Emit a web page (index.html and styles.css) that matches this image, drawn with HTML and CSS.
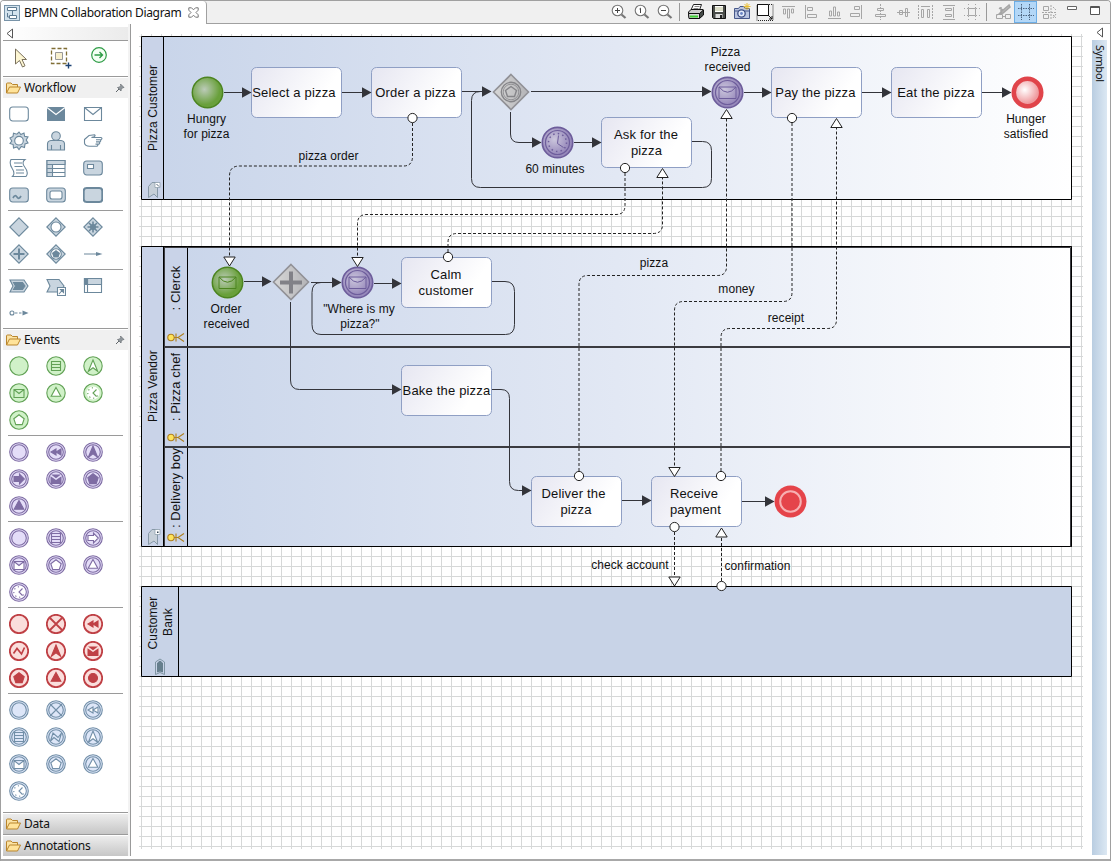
FILE: index.html
```
<!DOCTYPE html>
<html lang="en">
<head>
  <meta charset="UTF-8" />
  <meta name="viewport" content="width=device-width, initial-scale=1" />
  <title>BPMN Collaboration Diagram</title>
  <link rel="stylesheet" href="styles.css">
</head>
<body>
  <!-- shared icon shapes, 20x20 -->
  <svg class="sprite">
    <symbol id="ring" viewBox="0 0 20 20"><circle cx="10" cy="10" r="9.2"/></symbol>
    <symbol id="ring2" viewBox="0 0 20 20"><circle cx="10" cy="10" r="9.3"/><circle cx="10" cy="10" r="7.3"/></symbol>
    <symbol id="list" viewBox="0 0 20 20"><path d="M5.500 5.500h9v9h-9zM5.500 8.500h9M5.500 11.500h9"/></symbol>
    <symbol id="up" viewBox="0 0 20 20"><path d="M10 4l4.700 11.300L10 11.800l-4.700 3.500z"/></symbol>
    <symbol id="mail" viewBox="0 0 20 20"><path d="M5 6.500h10v8H5zM5 6.500L10 10.500l5-4"/></symbol>
    <symbol id="mailfull" viewBox="0 0 20 20"><path stroke="none" d="M4.500 7.300L10 11l5.500-3.700V15h-11z"/><path stroke="none" d="M5 5.500h10L10 9.300z"/></symbol>
    <symbol id="tri" viewBox="0 0 20 20"><path d="M10 4.500l4.800 8.700H5.200z"/></symbol>
    <symbol id="penta" viewBox="0 0 20 20"><path d="M10 4.800l5.200 3.900-2 5.900H6.800l-2-5.900z"/></symbol>
    <symbol id="clock" viewBox="0 0 20 20"><circle cx="10" cy="10" r="6.500" fill="#fff" stroke="none"/><path fill="none" d="M13.500 6.500L10 10l3.500 3.500"/><path fill="none" stroke-dasharray="1.200 2.800" d="M10 4.800a5.200 5.200 0 1 0 5.200 5.200"/></symbol>
    <symbol id="rewind" viewBox="0 0 20 20"><path d="M10 7v6L5 10zM15 7v6L10 10z"/></symbol>
    <symbol id="right" viewBox="0 0 20 20"><path d="M5 7.500h5.500V5.200l4.800 4.800-4.800 4.800v-2.300H5z"/></symbol>
    <symbol id="cross" viewBox="0 0 20 20"><path d="M4 4l12 12M16 4L4 16"/></symbol>
    <symbol id="zig" viewBox="0 0 20 20"><path fill="none" stroke-width="1.700" d="M4.500 12.500l3.500-5 4.500 5.500 3-6.500"/></symbol>
    <symbol id="zigopen" viewBox="0 0 20 20"><path d="M4.500 14L7 6l5 4.500L15.500 6 13 14.500 8 10.500z"/></symbol>
    <symbol id="dot" viewBox="0 0 20 20"><circle cx="10" cy="10" r="4.500"/></symbol>
    <symbol id="diamond" viewBox="0 0 20 20"><path d="M10 .8l9.200 9.200-9.200 9.200L.8 10z"/></symbol>
    <symbol id="rect" viewBox="0 0 20 20"><rect x=".7" y="3" width="18.600" height="14" rx="3"/></symbol>
    <symbol id="folder" viewBox="0 0 16 16"><path d="M1.500 13V4q0-1 1-1H6l1.500 1.500h5V7" fill="#fbe3a4" stroke="#b9852c"/><path d="M1.500 13L4.500 7h11L12.500 13z" fill="#ffe39a" stroke="#b9852c"/></symbol>
    <symbol id="pin" viewBox="0 0 10 10"><path d="M5.500 1l3.500 3.500-1.200.2-1.500 1.500-.3 1.800L2.500 4.500l1.800-.3 1.400-1.500z" fill="#8f969b" stroke="#6e7478" stroke-width=".8"/><path d="M4 6L1 9" stroke="#5e6468"/></symbol>
    <symbol id="lens" viewBox="0 0 18 18"><circle cx="7.500" cy="7.500" r="5.300" fill="#fff" stroke="#777" stroke-width="1.100"/><path d="M11.500 11.500l4 3.500" stroke="#777" stroke-width="2.200"/></symbol>
  </svg>

  <div class="window">
    <header class="bar">
      <div class="tab">
        <svg width="16" height="16" viewBox="0 0 16 16"><rect x=".5" y=".5" width="15" height="15" fill="#d3e3ee" stroke="#7893a8"/><path d="M3.500 2.500h9v3h-9zM5.500 10.500h7v3h-7z" fill="#fff" stroke="#5d7b92"/><path d="M8.500 6v4M3.500 8v4h2" fill="none" stroke="#5d7b92"/></svg>
        <span class="tab-title">BPMN Collaboration Diagram</span>
        <svg width="11" height="11" viewBox="0 0 11 11"><path d="M.8.8h2.700l2 2 2-2h2.700v2.400L8 5.500l2.200 2.300v2.400H7.500l-2-2-2 2H.8V7.800L3 5.500.8 3.200z" fill="#fff" stroke="#777"/></svg>
      </div>
      <div class="tools">
        <div class="tool"><svg width="18" height="18"><use href="#lens"/><path d="M5 7.500h5M7.500 5v5" stroke="#444"/></svg></div>
        <div class="tool"><svg width="18" height="18"><use href="#lens"/><path d="M6.500 6l1-.8V10" fill="none" stroke="#444"/></svg></div>
        <div class="tool"><svg width="18" height="18"><use href="#lens"/><path d="M5 7.500h5" stroke="#444"/></svg></div>
        <div class="sep"></div>
        <div class="tool"><svg width="18" height="18"><path d="M6.500 1.500h8L12.500 7H4z" fill="#fff" stroke="#222"/><path d="M7.500 3.500h5M6.500 5.500h5" stroke="#888"/><path d="M1.500 9L4 6.500h12l.5 4-3 4H2z" fill="#ccc" stroke="#111"/><path d="M1.500 10.500h11v5H2z" fill="#d8ddd8" stroke="#111"/><path d="M12.500 10.500l4-3.500v5l-4 3.500z" fill="#454b48" stroke="#111"/><path d="M3 13.500h8" stroke="#3fcf35" stroke-width="2"/></svg></div>
        <div class="tool"><svg width="18" height="18"><path d="M2.500 2.500h13v13h-12l-1-1z" fill="#4a4d4a" stroke="#111"/><path d="M5 3h8v6H5z" fill="#fff"/><path d="M5 5h8M5 7h8" stroke="#b7bb90"/><path d="M5.500 11h7v4h-7z" fill="#ddd"/><path d="M10 12h2v3h-2z" fill="#222"/></svg></div>
        <div class="tool"><svg width="18" height="18"><path d="M1.500 5.500h4L7 3.500h4l1.500 2h4v10h-15z" fill="#b9c4e0" stroke="#47588a"/><path d="M1 8h16" stroke="#47588a"/><circle cx="8.500" cy="10.500" r="3.700" fill="#e4ecfb" stroke="#3b4d83" stroke-width="1.300"/><circle cx="8.500" cy="10.500" r="1.400" fill="#6c86c5"/><path d="M14 0v7M10.500 3.500h7M11.500 1l5 5M16.500 1l-5 5" stroke="#eabf35"/></svg></div>
        <div class="tool"><svg width="18" height="18"><path d="M1 1.500h16v16H1z" fill="none" stroke="#222" stroke-dasharray="1 1"/><path d="M1.500 1.500h11v11h-11z" fill="#fff" stroke="#111"/><path d="M12 12l4 4m0-3v3h-3" stroke="#111" fill="none"/></svg></div>
        <div class="tool dim"><svg width="18" height="18"><path d="M3 3.500h13"/><path d="M4.500 6h2v5h-2zM8.500 6h2v9h-2zM12.500 6h2v4h-2z"/></svg></div>
        <div class="tool dim"><svg width="18" height="18"><path d="M3.500 2v14"/><path d="M5.500 4.500h5v3h-5zM5.500 11.500h9v3h-9z"/></svg></div>
        <div class="tool dim"><svg width="18" height="18"><path d="M3 15.500h13"/><path d="M4.500 8h2v5h-2zM8.500 4h2v9h-2zM12.500 9h2v4h-2z"/></svg></div>
        <div class="tool dim"><svg width="18" height="18"><path d="M13.500 2v14"/><path d="M6.500 3.500h5v3h-5zM2.500 10.500h9v3h-9z"/></svg></div>
        <div class="tool dim"><svg width="18" height="18"><path d="M9.500 1v16" stroke-dasharray="2 1"/><path d="M6.500 5.500h6v2h-6zM4.500 11.500h10v2h-10z"/></svg></div>
        <div class="tool dim"><svg width="18" height="18"><path d="M3 9.500h13"/><path d="M5.500 7.500h3v4h-3zM11.500 5.500h2v8h-2z"/></svg></div>
        <div class="tool dim"><svg width="18" height="18"><path d="M1.500 2v14M15.500 2v14" stroke-dasharray="2 1"/><path d="M4 3.500h9"/><path d="M4.500 6.500h2v8h-2zM10.500 6.500h2v8h-2z"/></svg></div>
        <div class="tool dim"><svg width="18" height="18"><path d="M3 2.500h12M3 16.500h12"/><path d="M5.500 5.500h6v2h-6zM5.500 11.500h6v2h-6zM13.500 4v11"/></svg></div>
        <div class="tool dim"><svg width="18" height="18"><path d="M5.500 5.500h7v7h-7z"/><path d="M5.500 1v16M12.500 1v16M1 5.500h16M1 12.500h16" stroke-dasharray="1 2"/></svg></div>
        <div class="sep"></div>
        <div class="tool dim"><svg width="18" height="18"><path d="M15 2L8 8l-3 3 4-1 7-6zM5 5l4 2M7 4v6" fill="#bbb" stroke-width="1.500"/><path d="M2.500 11.500h6v4h-6zM11.500 11.500h5v4h-5zM9 13.500h2"/></svg></div>
        <div class="tool on"><svg width="18" height="18"><path d="M4.500 1v16M12.500 1v16M1 5.500h16M1 12.500h16" stroke="#4c6480" stroke-dasharray="1.500 1"/></svg></div>
        <div class="tool dim"><svg width="18" height="18"><path d="M3.500 3.500h5v4h-5zM3.500 11.500h5v4h-5z"/><path d="M11 2v15M2 9.500h15M13 4l3 3M13 12l3 3M16 11l-3 4" stroke-dasharray="2 1"/></svg></div>
        <div class="tool corner"><svg width="12" height="6"><path d="M1.500 1.500h9v3h-9z" fill="#fff" stroke="#666"/></svg></div>
        <div class="tool corner"><svg width="12" height="11"><path d="M1.500 1.500h9v8h-9zM1.500 2.500h9" fill="#fff" stroke="#555"/></svg></div>
      </div>
    </header>

    <div class="main">
      <aside class="palette">
        <div class="collapse"><svg width="8" height="11"><path d="M6.500 1v9L1 5.500z" fill="#fff" stroke="#555"/></svg></div>
        <div class="modes">
          <svg width="16" height="21"><path d="M1.500 2v15l4-3.500 3 6.500 2.500-1.200-3-6.300h4.500z" fill="#fdf6d3" stroke="#7a705c"/></svg>
          <svg width="22" height="22"><path d="M1.500 1.500h15v15h-15z" fill="none" stroke="#806e35" stroke-width="1.300" stroke-dasharray="4 2"/><path d="M5.500 5.500h7v7h-7z" fill="#f7efce" stroke="#999"/><path d="M15.500 18.500h6M18.500 15.500v6" stroke="#1c4273" stroke-width="1.400"/></svg>
          <svg width="18" height="18"><circle cx="9" cy="8" r="7.300" fill="#f4fff4" stroke="#2e9c46" stroke-width="1.200"/><path d="M4.500 8h8M9.500 5l3 3-3 3" fill="none" stroke="#2e9c46" stroke-width="1.400"/></svg>
        </div>

        <div class="drawer"><svg width="16" height="16"><use href="#folder"/></svg><span>Workflow</span><svg class="pin" width="10" height="10"><use href="#pin"/></svg></div>
        <div class="group first flow">
          <svg class="icon"><use class="hollow" href="#rect"/></svg>
          <svg class="icon"><path class="solid" stroke="none" d="M1 3h18v14H1z"/><path d="M1 3.500l9 7 9-7" fill="none" stroke="#fff"/></svg>
          <svg class="icon"><path class="hollow" d="M1.500 3.500h17v13h-17zM1.500 3.500L10 10.500l8.500-7"/></svg>
          <svg class="icon"><path d="M10 1l1.800 2.500L15 2l.6 3.300L19 6l-1.800 3L19 12l-3 1-.5 3.500-3.200-1L10 18.500 8 16l-3.500 1-.3-3.400L1 12.500 2.800 10 1 7l3-1.500.5-3.300 3.400 1z"/><circle class="hollow" cx="10" cy="9.700" r="4.300"/></svg>
          <svg class="icon"><path d="M1.500 19v-6q0-3 3.500-3.500h10q3.500.5 3.500 3.500v6zM5.500 19v-5M14.500 19v-5"/><circle cx="10" cy="5" r="4.300"/></svg>
          <svg class="icon"><path class="hollow" d="M1.500 8.500L6 4.500l5.500-.8q1.500 1-.5 2L8.500 6.500H18q2 1 0 2.200h-5H17q1.500 1 0 2.200h-4 3q1.500 1 0 2.200h-3.500 2q1 1.200-.5 2.100H6.500q-4.500 0-5-3z"/></svg>
          <svg class="icon"><path class="hollow" d="M2 1.500h14q-4 3 0 8t1 9H3.500q3-3-.3-8T2 1.500zM5 5h8M5.500 8.500h8M7 12h8M7 15h8"/></svg>
          <svg class="icon"><path class="hollow" d="M1 2.500h18v16H1z"/><path d="M1 2.500h18v4H1zM1 6.500h5.500v12H1zM1 10.500h18M1 14.500h18"/></svg>
          <svg class="icon"><use href="#rect"/><path class="hollow" d="M4.500 6.500h6v4h-6z"/></svg>
          <svg class="icon"><use href="#rect"/><path d="M4 13q2-4 4-1t4-1" fill="none" stroke-width="1.700"/></svg>
          <svg class="icon"><use href="#rect"/><rect class="hollow" x="4" y="6" width="12" height="8" rx="2"/></svg>
          <svg class="icon thick"><use href="#rect"/></svg>
        </div>
        <div class="group flow">
          <svg class="icon"><use href="#diamond"/></svg>
          <svg class="icon"><use href="#diamond"/><circle class="hollow" cx="10" cy="10" r="5"/></svg>
          <svg class="icon"><use href="#diamond"/><path d="M10 4.500v11M4.500 10h11M6 6l8 8M14 6l-8 8" stroke-width="1.600"/><circle class="solid" cx="10" cy="10" r="3" stroke="none"/></svg>
          <svg class="icon"><use href="#diamond"/><path d="M10 4.500v11M4.500 10h11" stroke-width="2"/></svg>
          <svg class="icon"><use href="#diamond"/><circle class="hollow" cx="10" cy="10" r="5.300"/><path class="solid" d="M10 6l4 3-1.500 4.500h-5L6 9z" stroke="none"/></svg>
          <svg class="icon"><path d="M1 10h14"/><path class="solid" stroke="none" d="M13 8l6.500 2-6.500 2z"/></svg>
        </div>
        <div class="group flow">
          <svg class="icon"><path d="M1 4h14l4 6-4 6H1l3-6z"/><path class="solid" d="M4.500 6.500h9l2.500 3.500-2.500 3.500h-9L6.500 10z"/></svg>
          <svg class="icon"><path d="M1 3.500h12l5 6.500-4 6H1l3-6z"/><path class="hollow" d="M11.500 11.500h8v8h-8z"/><path class="solid" d="M13 18l3.500-4M14.500 13.500h3v3z"/></svg>
          <svg class="icon"><path class="hollow" d="M1.500 2.500h17v14h-17z"/><path d="M1.500 2.500h17v6h-17z"/><path class="solid" d="M1.500 2.500h3v6h-3z"/><path d="M4.500 3v13.500"/></svg>
          <svg class="icon"><circle class="hollow" cx="3" cy="10" r="2"/><path d="M6 10h10" stroke-dasharray="2.500 1.500"/><path class="solid" stroke="none" d="M13.500 7.500l6 2.500-6 2.500z"/></svg>
        </div>

        <div class="drawer"><svg width="16" height="16"><use href="#folder"/></svg><span>Events</span><svg class="pin" width="10" height="10"><use href="#pin"/></svg></div>
        <div class="group first green">
          <svg class="icon"><use href="#ring"/></svg>
          <svg class="icon"><use href="#ring"/><use href="#list"/></svg>
          <svg class="icon"><use href="#ring"/><use class="hollow" href="#up"/></svg>
          <svg class="icon"><use href="#ring"/><use href="#mail"/></svg>
          <svg class="icon"><use href="#ring"/><use class="hollow" href="#tri"/></svg>
          <svg class="icon"><use href="#ring"/><use href="#clock"/></svg>
          <svg class="icon"><use href="#ring"/><use class="hollow" href="#penta"/></svg>
        </div>
        <div class="group purple">
          <svg class="icon"><use href="#ring2"/></svg>
          <svg class="icon"><use href="#ring2"/><use class="solid" href="#rewind"/></svg>
          <svg class="icon"><use href="#ring2"/><use class="solid" href="#up"/></svg>
          <svg class="icon"><use href="#ring2"/><use class="solid" href="#right"/></svg>
          <svg class="icon"><use href="#ring2"/><use class="solid" href="#mailfull"/></svg>
          <svg class="icon"><use href="#ring2"/><use class="solid" href="#penta"/></svg>
          <svg class="icon"><use href="#ring2"/><use class="solid" href="#tri"/></svg>
        </div>
        <div class="group purple">
          <svg class="icon"><use href="#ring2"/></svg>
          <svg class="icon"><use href="#ring2"/><use href="#list"/></svg>
          <svg class="icon"><use href="#ring2"/><use class="hollow" href="#right"/></svg>
          <svg class="icon"><use href="#ring2"/><use class="hollow" href="#mail"/></svg>
          <svg class="icon"><use href="#ring2"/><use class="hollow" href="#penta"/></svg>
          <svg class="icon"><use href="#ring2"/><use class="hollow" href="#tri"/></svg>
          <svg class="icon"><use href="#ring2"/><use href="#clock"/></svg>
        </div>
        <div class="group red">
          <svg class="icon"><use class="bold" href="#ring"/></svg>
          <svg class="icon"><use class="bold" href="#ring"/><use class="bold" href="#cross"/></svg>
          <svg class="icon"><use class="bold" href="#ring"/><use class="solid" href="#rewind"/></svg>
          <svg class="icon"><use class="bold" href="#ring"/><use href="#zig"/></svg>
          <svg class="icon"><use class="bold" href="#ring"/><use class="solid" href="#up"/></svg>
          <svg class="icon"><use class="bold" href="#ring"/><use class="solid" href="#mailfull"/></svg>
          <svg class="icon"><use class="bold" href="#ring"/><use class="solid" href="#penta"/></svg>
          <svg class="icon"><use class="bold" href="#ring"/><use class="solid" href="#tri"/></svg>
          <svg class="icon"><use class="bold" href="#ring"/><use class="solid" href="#dot"/></svg>
        </div>
        <div class="group blue">
          <svg class="icon"><use href="#ring2"/></svg>
          <svg class="icon"><use href="#ring2"/><use href="#cross"/></svg>
          <svg class="icon"><use href="#ring2"/><use class="hollow" href="#rewind"/></svg>
          <svg class="icon"><use href="#ring2"/><use href="#list"/></svg>
          <svg class="icon"><use href="#ring2"/><use href="#zigopen"/></svg>
          <svg class="icon"><use href="#ring2"/><use class="hollow" href="#up"/></svg>
          <svg class="icon"><use href="#ring2"/><use class="hollow" href="#mail"/></svg>
          <svg class="icon"><use href="#ring2"/><use class="hollow" href="#penta"/></svg>
          <svg class="icon"><use href="#ring2"/><use class="hollow" href="#tri"/></svg>
          <svg class="icon"><use href="#ring2"/><use href="#clock"/></svg>
        </div>
        <div class="closed">
          <div class="drawer shut"><svg width="16" height="16"><use href="#folder"/></svg><span>Data</span></div>
          <div class="drawer shut"><svg width="16" height="16"><use href="#folder"/></svg><span>Annotations</span></div>
        </div>
      </aside>

      <div class="canvas">
        <svg class="diagram" width="960" height="831" viewBox="131 24 960 831">
          <defs>
            <pattern id="grid" x="141" y="36" width="10" height="10" patternUnits="userSpaceOnUse"><path d="M.5 0v10M0 .5h10" stroke="#d6d8d8"/></pattern>
            <linearGradient id="pool" gradientUnits="userSpaceOnUse" x1="163" y1="0" x2="1071" y2="0"><stop offset="0" stop-color="#c9d5ea"/><stop offset=".5" stop-color="#e2e8f4"/><stop offset="1" stop-color="#fff"/></linearGradient>
            <linearGradient id="taskfill" x2="1" y2=".35"><stop offset="0" stop-color="#e6e6f1"/><stop offset=".9" stop-color="#fff"/></linearGradient>
            <radialGradient id="gfill" cx=".4" cy=".4"><stop offset="0" stop-color="#bccbb9"/><stop offset="1" stop-color="#69a03b"/></radialGradient>
            <radialGradient id="pfill" cx=".4" cy=".4"><stop offset="0" stop-color="#cbc6dc"/><stop offset="1" stop-color="#9789bb"/></radialGradient>
            <radialGradient id="rfill" cx=".4" cy=".4"><stop offset="0" stop-color="#fff"/><stop offset="1" stop-color="#ef9a9e"/></radialGradient>
            <linearGradient id="gwfill" x2="1"><stop offset="0" stop-color="#d7d7d7"/><stop offset="1" stop-color="#b4b4b7"/></linearGradient>
            <marker id="arrow" markerUnits="userSpaceOnUse" markerWidth="10" markerHeight="12" refX="9" refY="6"><path d="M0 .8v10.400L9.500 6z" fill="#33343a"/></marker>
            <marker id="open" markerUnits="userSpaceOnUse" markerWidth="12" markerHeight="14" refX="1" refY="7" orient="auto"><path d="M1 1.300v11.400L10 7z" fill="#fff" stroke="#222"/></marker>
            <marker id="bubble" markerUnits="userSpaceOnUse" markerWidth="12" markerHeight="12" refX="6" refY="6"><circle cx="6" cy="6" r="4.600" fill="#fff" stroke="#222"/></marker>
            <g id="task"><rect width="90" height="50" rx="5" fill="url(#taskfill)" stroke="#8f9fc4"/></g>
            <g id="gateway"><path d="M0-17.500L17.500 0 0 17.500-17.500 0z" fill="url(#gwfill)" stroke="#919196" stroke-width="1.600"/></g>
            <g id="caught"><circle r="15.200" fill="url(#pfill)" stroke="#6d5d9b" stroke-width="1.700"/><circle r="12" fill="none" stroke="#6d5d9b" stroke-width="1.200"/></g>
            <g id="letter"><path d="M-8.500-5.500h17v11.500h-17zM-8.500-5.500Q0 5 8.500-5.500" fill="none"/></g>
            <g id="actor" fill="none" stroke="#b0801e" stroke-width="1.100"><circle cx="-4.500" r="3.200" fill="#ffe45c"/><path d="M-1.500 0h4M.5-4v8M8.500-4L2.500 0l6 4"/></g>
            <g id="flag"><path d="M-5 7.500v-11l3.500-4h5.500v15l-3.500-3.500z" fill="#c6cfd8" stroke="#8799a8"/></g>
          </defs>

          <rect x="139" y="34" width="944" height="815" fill="url(#grid)"/>

          <!-- Pizza Customer -->
          <g class="frame">
            <path d="M141.500 36.500h22v163h-22z" fill="#c9d3e8"/>
            <path d="M163.500 36.500h908v163h-908z" fill="url(#pool)"/>
          </g>
          <!-- Pizza Vendor -->
          <g class="frame">
            <path d="M141.500 246.500h930v300h-930z" fill="#c9d3e8"/>
            <path d="M187.500 246.500h884v300h-884z" fill="url(#pool)"/>
            <path d="M163.500 247v299M187.500 247v299"/>
            <path d="M165 347h906M165 447h906" class="lane"/>
            <path d="M164.500 247.500h906v299M164.500 247v299" class="lane thin"/>
          </g>
          <!-- Customer Bank -->
          <g class="frame">
            <path d="M141.500 586.500h930v90h-930zM178.500 586.500v90" fill="#c8d3e7"/>
          </g>

          <g class="side">
            <text transform="translate(156.500 108) rotate(-90)">Pizza Customer</text>
            <text transform="translate(156.500 386) rotate(-90)">Pizza Vendor</text>
            <text transform="translate(156.500 623) rotate(-90)">Customer</text>
            <text transform="translate(171.500 622) rotate(-90)">Bank</text>
          </g>
          <g class="side big">
            <text transform="translate(180 288) rotate(-90)">: Clerck</text>
            <text transform="translate(180 387) rotate(-90)">: Pizza chef</text>
            <text transform="translate(180 488) rotate(-90)">: Delivery boy</text>
          </g>
          <use href="#actor" x="175.500" y="337.500"/>
          <use href="#actor" x="175.500" y="437.500"/>
          <use href="#actor" x="175.500" y="537.500"/>
          <use href="#flag" x="153.500" y="190"/><path d="M155 182.500h5v5h-5z" fill="#fff" stroke="#8799a8" stroke-width=".7"/><path d="M156.500 184l2.500 2.500" stroke="#567"/>
          <use href="#flag" x="153.500" y="537"/><path d="M155 529.500h5v5h-5z" fill="#fff" stroke="#8799a8" stroke-width=".7"/><path d="M157 531.500h1.500v1.500h-1.500z" fill="#345"/>
          <path d="M155.500 674.500v-12.500l4.500-3 4.500 3v12.500l-4.500-2z" fill="none" stroke="#7f95a3"/><path d="M157.500 672v-9l2.500-2 2.500 2v9l-2.500-1z" fill="#667f8d" stroke="#667f8d"/>

          <!-- tasks -->
          <use href="#task" x="251.500" y="67.500"/>
          <use href="#task" x="371.500" y="67.500"/>
          <use href="#task" x="771.500" y="67.500"/>
          <use href="#task" x="891.500" y="67.500"/>
          <use href="#task" x="601.500" y="117.500"/>
          <use href="#task" x="401.500" y="257.500"/>
          <use href="#task" x="401.500" y="365.500"/>
          <use href="#task" x="531.500" y="476.500"/>
          <use href="#task" x="651.500" y="476.500"/>

          <!-- sequence flows -->
          <g class="flowline">
            <path d="M224 92.500h27"/>
            <path d="M342 92.500h29"/>
            <path d="M462 91.500h29"/>
            <path d="M531 91.500h180"/>
            <path d="M744 92.500h27"/>
            <path d="M862 92.500h29"/>
            <path d="M982 92.500h29"/>
            <path d="M510.500 112v22q0 8.500 8.500 8.500h22"/>
            <path d="M574 142.500h27"/>
            <path d="M244 281.500h27"/>
            <path d="M311 282.500h30"/>
            <path d="M374 283.500h27"/>
            <path d="M290.500 302v78q0 9.500 9 9.500h101.500"/>
            <path d="M492 389.500h9q8.500 0 8.500 9v83q0 9 9 9h12.500"/>
            <path d="M622 500.500h29"/>
            <path d="M742 501.500h32"/>
          </g>
          <g class="loop">
            <path d="M692 141.500h10.500q9 0 9 9v28q0 9-9 9h-222q-9 0-9-9v-78q0-9 9-9"/>
            <path d="M492 281.500h13q9.500 0 9.500 10v33q0 10-9 10h-184.500q-9 0-9-10v-32q0-10 9-10"/>
          </g>

          <!-- events and gateways -->
          <circle cx="207.500" cy="92.500" r="15.200" fill="url(#gfill)" stroke="#4c8420" stroke-width="1.500"/>
          <circle cx="227.500" cy="282.500" r="15.200" fill="url(#gfill)" stroke="#4c8420" stroke-width="1.500"/>
          <use href="#letter" x="227.500" y="282.500" stroke="#4c8420"/>
          <use href="#caught" x="557.500" y="142.500"/>
          <g transform="translate(557.500 142.500)" fill="none" stroke="#6d5d9b"><circle r="9" stroke-width="1.500" stroke-dasharray="1.500 3.210"/><path d="M1-7L0 1l6 4"/></g>
          <use href="#caught" x="727.500" y="92.500"/><use href="#letter" x="727.500" y="92.500" stroke="#6d5d9b"/>
          <use href="#caught" x="357.500" y="282.500"/><use href="#letter" x="357.500" y="282.500" stroke="#6d5d9b"/>
          <circle cx="1027.500" cy="92.500" r="13.700" fill="url(#rfill)" stroke="#e0444a" stroke-width="4.600"/>
          <circle cx="790.500" cy="501.500" r="16" fill="#e5444a"/><circle cx="790.500" cy="501.500" r="10.300" fill="none" stroke="#f7b0b2" stroke-width="2"/>
          <use href="#gateway" x="511" y="92"/>
          <g transform="translate(511 92)" fill="none" stroke="#858589" stroke-width="1.400"><circle r="9.700"/><circle r="7.800" stroke-width=".8"/><path d="M0-5.500l5.500 4-2 6h-7l-2-6z"/></g>
          <use href="#gateway" x="291" y="282"/>
          <path d="M291 271.500v22M280 282.500h22" stroke="#818187" stroke-width="4"/>

          <!-- message flows -->
          <g class="message">
            <path d="M412.500 118v38.500q0 9.500-9 9.500h-164q-10 0-10 10v81"/>
            <path d="M625 168v37.500q0 9-9 9h-249q-9.500 0-9.500 9v34"/>
            <path d="M448 257v-14.500q0-9 9-9h196q9.500 0 9.500-9v-47"/>
            <path d="M579 476v-191.500q0-9 9-9h129.500q9 0 9-9v-148"/>
            <path d="M792 118v174.500q0 9-9 9h-99.500q-9 0-9 9v157"/>
            <path d="M721 476v-138.500q0-9 9-9h97.500q9 0 9-9v-192"/>
            <path d="M674.500 527v50"/>
            <path d="M721.500 586v-49"/>
          </g>

          <g class="task-text">
            <text x="294" y="97">Select a pizza</text>
            <text x="415.500" y="97">Order a pizza</text>
            <text x="815.500" y="97">Pay the pizza</text>
            <text x="936" y="97">Eat the pizza</text>
            <text x="646" y="139">Ask for the</text><text x="646.500" y="155">pizza</text>
            <text x="446" y="279">Calm</text><text x="446" y="295">customer</text>
            <text x="446.500" y="395">Bake the pizza</text>
            <text x="573.500" y="498">Deliver the</text><text x="576" y="514">pizza</text>
            <text x="694" y="498">Receive</text><text x="695.500" y="514">payment</text>
          </g>
          <g class="label">
            <text x="206.500" y="123">Hungry</text><text x="206.500" y="138">for pizza</text>
            <text x="328.500" y="160">pizza order</text>
            <text x="555" y="173">60 minutes</text>
            <text x="725.500" y="56">Pizza</text><text x="727.500" y="71">received</text>
            <text x="1026" y="123">Hunger</text><text x="1026" y="138">satisfied</text>
            <text x="226" y="313">Order</text><text x="226.500" y="328">received</text>
            <text x="359" y="313">"Where is my</text><text x="360" y="328">pizza?"</text>
            <text x="654" y="267">pizza</text>
            <text x="736.500" y="293">money</text>
            <text x="786" y="322">receipt</text>
            <text x="630" y="569">check account</text>
            <text x="757.500" y="570">confirmation</text>
          </g>
        </svg>
      </div>

      <aside class="symbols">
        <div class="expand"><svg width="8" height="11"><path d="M6.500 1v9L1 5.500z" fill="#fff" stroke="#555"/></svg></div>
        <div class="symbol-tab">Symbol</div>
      </aside>
    </div>
  </div>
</body>
</html>
```

FILE: styles.css
```
* {
  box-sizing: border-box;
}
body {
  margin: 0;
  font-family: "Noto Sans", "Open Sans", sans-serif;
  font-size: 12px;
  color: #111;
  background: #fff;
}
svg {
  display: block;
  flex: none;
}
.sprite {
  width: 0;
  height: 0;
  position: absolute;
}
.window {
  width: 1111px;
  height: 861px;
  display: flex;
  flex-direction: column;
  border: 1px solid #a0a0a0;
  border-width: 1px 1px 0;
  border-radius: 4px 4px 0 0;
  overflow: hidden;
}

/* tab and toolbar */
.bar {
  display: flex;
  height: 23px;
  flex: none;
  background: #f0f0f0;
}
.tab {
  width: 206px;
  display: flex;
  align-items: center;
  padding-left: 3px;
  background: #fff;
  border-right: 1px solid #a0a0a0;
  border-radius: 0 4px 0 0;
}
.tab-title {
  width: 158px;
  margin: 0 6px 0 4px;
  white-space: nowrap;
  letter-spacing: -0.33px;
}
.tools {
  flex: 1;
  display: flex;
  justify-content: flex-end;
  padding-right: 4px;
  border-bottom: 1px solid #a0a0a0;
}
.tool {
  width: 23px;
  display: flex;
  align-items: center;
  justify-content: center;
}
.tool.dim svg {
  fill: none;
  stroke: #a6a6a6;
}
.tool.on {
  background: #b3d7f7;
  border: 1px solid #6daee6;
}
.tool.corner {
  align-items: flex-start;
  padding-top: 4px;
}
.sep {
  width: 1px;
  height: 18px;
  margin: 2px 4px 0 3px;
  background: #999;
}

.main {
  flex: 1;
  display: flex;
  min-height: 0;
  border-bottom: 2px solid #a8a8a8;
}

/* palette */
.palette {
  width: 130px;
  flex: none;
  height: 832px;
  padding: 3px 2px 0;
  display: flex;
  flex-direction: column;
  border-right: 1px solid #9a9a9a;
  box-shadow: inset -2px 0 #f3f3f3;
}
.collapse {
  height: 14px;
  padding: 1px 0 0 3px;
  background: linear-gradient(90deg, #fff, #ebebeb);
  border-bottom: 1px solid #9a9a9a;
}
.modes {
  height: 35px;
  display: flex;
  align-items: flex-start;
  padding: 6px 0 0 11px;
}
.modes svg + svg {
  margin-left: 20px;
}
.modes svg:last-child {
  margin-left: 18px;
}
.drawer {
  height: 22px;
  flex: none;
  display: flex;
  align-items: center;
  gap: 3px;
  padding: 0 3px 0 2px;
  background: #f0f0f0;
  border-top: 1px solid #9a9a9a;
  box-shadow: inset 0 1px #fff;
  letter-spacing: -0.2px;
}
.drawer .pin {
  margin-left: auto;
}
.drawer.shut {
  background: linear-gradient(#efefef, #c6c6c6);
}
.closed {
  margin-top: auto;
}
.group {
  display: grid;
  grid-template-columns: repeat(3, 20px);
  gap: 7px 17px;
  margin: 0 5px;
  padding: 6px 1px 5px;
  border-top: 1px solid #9a9a9a;
}
.group.first {
  border-top: none;
}
.icon {
  width: 20px;
  height: 20px;
  stroke: currentColor;
  stroke-width: 1.1;
  fill: var(--tint);
}
.solid { fill: currentColor; }
.hollow { fill: #fff; }
.bold { stroke-width: 1.8; }
.thick { stroke-width: 2; }
.flow { color: #6c889c; --tint: #c9d5df; }
.green { color: #62a256; --tint: #d0f1c8; }
.purple { color: #7e6ca3; --tint: #e4ddf8; }
.red { color: #bf4045; --tint: #fadedc; }
.blue { color: #728fa8; --tint: #dde6f8; }

/* diagram */
.canvas {
  flex: 1;
  overflow: hidden;
}
.diagram text {
  font-family: "Liberation Sans", Arial, sans-serif;
  text-anchor: middle;
  fill: #111;
}
.frame {
  stroke: #000;
}
.lane {
  fill: none;
  stroke: #3b3b40;
  stroke-width: 2;
}
.lane.thin {
  stroke-width: 1;
}
.side text {
  font-size: 12px;
  letter-spacing: 0.1px;
}
.side.big text {
  font-size: 13px;
}
.task-text text {
  font-size: 13px;
  letter-spacing: 0.18px;
}
.label text {
  font-size: 12px;
  letter-spacing: 0.05px;
}
.flowline path,
.loop path {
  fill: none;
  stroke: #33343a;
}
.flowline path {
  marker-end: url(#arrow);
}
.message path {
  fill: none;
  stroke: #222;
  stroke-dasharray: 3 2;
  marker-start: url(#bubble);
  marker-end: url(#open);
}

/* right hand bar */
.symbols {
  width: 17px;
  flex: none;
  margin: 2px 1px 0 0;
}
.expand {
  height: 14px;
  padding: 1px 0 0 4px;
}
.symbol-tab {
  width: 15px;
  height: 815px;
  padding-top: 5px;
  writing-mode: vertical-rl;
  line-height: 14px;
  font-size: 11px;
  letter-spacing: -0.2px;
  background: linear-gradient(90deg, #b9cde1, #dce8f3);
}
```
